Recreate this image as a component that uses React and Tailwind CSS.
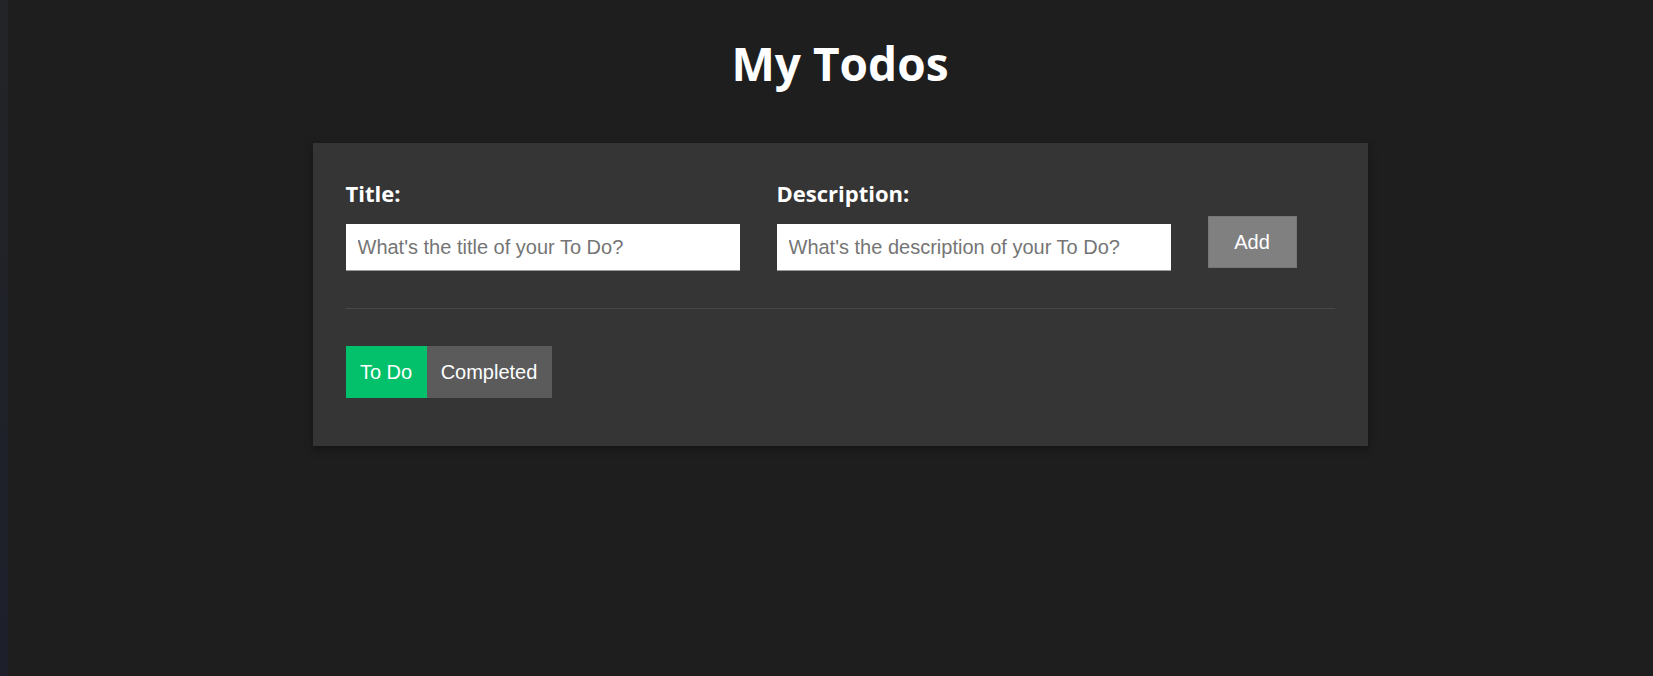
import { useState } from 'react'

const heading = { fontFamily: '"Open Sans", "Noto Sans", sans-serif' }
const body = { fontFamily: '"Liberation Sans", Arial, sans-serif' }

function Field({ label, placeholder, value, onChange }) {
  return (
    <div className="flex w-[394px] flex-col">
      <label className="mb-[15px] text-[22px] font-bold leading-[32px] text-white" style={heading}>
        {label}
      </label>
      <input
        value={value}
        onChange={(e) => onChange(e.target.value)}
        placeholder={placeholder}
        className="h-[47px] w-full border-b border-[#9a9a9a] bg-white px-3 text-[20px] text-[#222] outline-none placeholder:text-[#757575]"
        style={body}
      />
    </div>
  )
}

export default function App() {
  const [title, setTitle] = useState('')
  const [desc, setDesc] = useState('')
  const [tab, setTab] = useState('todo')

  return (
    <div className="flex min-h-screen bg-[#1e1e1e]">
      {/* side strip */}
      <div className="w-[8px] shrink-0 bg-gradient-to-b from-[#232427] to-[#1d202b]" />

      <div className="flex flex-1 flex-col items-center pl-[19px]">
        <h1 className="pt-[31px] text-[46px] font-bold leading-[64px] text-white" style={heading}>
          My Todos
        </h1>

        {/* ── Card ─────────────────────────────────────────── */}
        <div className="mt-[48px] w-[1055px] bg-[#353535] px-[33px] pb-[48px] pt-[34px] shadow-[0_3px_8px_rgba(0,0,0,0.35)]">
          <div className="flex items-end gap-[37px]">
            <Field label="Title:" placeholder="What's the title of your To Do?" value={title} onChange={setTitle} />
            <Field label="Description:" placeholder="What's the description of your To Do?" value={desc} onChange={setDesc} />
            <button
              className="mb-[3px] h-[52px] w-[89px] border border-[#767676] bg-[#808080] text-[20px] text-white"
              style={body}
            >
              Add
            </button>
          </div>

          <div className="mt-[37px] h-px bg-[#474747]" />

          {/* tabs */}
          <div className="mt-[37px] flex">
            <button
              onClick={() => setTab('todo')}
              className={
                'h-[52px] w-[81px] text-[20px] text-white ' +
                (tab === 'todo' ? 'bg-[#03c16a]' : 'bg-[#5b5b5b]')
              }
              style={body}
            >
              To Do
            </button>
            <button
              onClick={() => setTab('done')}
              className={
                'h-[52px] w-[125px] text-[20px] text-white ' +
                (tab === 'done' ? 'bg-[#03c16a]' : 'bg-[#5b5b5b]')
              }
              style={body}
            >
              Completed
            </button>
          </div>
        </div>
      </div>
    </div>
  )
}
